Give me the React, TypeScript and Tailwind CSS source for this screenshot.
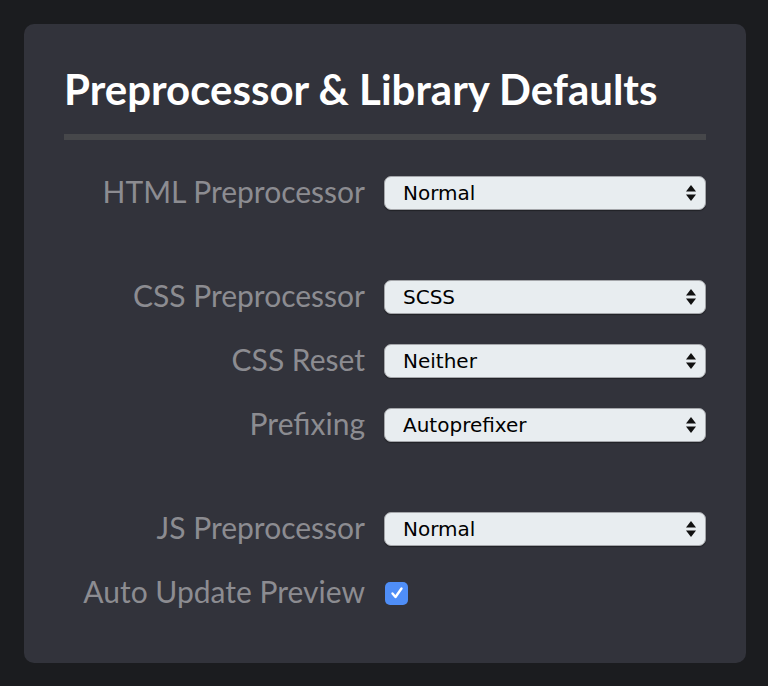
import { useState } from 'react'

type Row = { label: string; value?: string; options?: string[]; gapBefore?: boolean; checkbox?: boolean }

const ROWS: Row[] = [
  { label: 'HTML Preprocessor', value: 'Normal', options: ['Normal', 'Markdown', 'Pug', 'Haml'] },
  { label: 'CSS Preprocessor', value: 'SCSS', options: ['None', 'SCSS', 'Sass', 'Less', 'Stylus'], gapBefore: true },
  { label: 'CSS Reset', value: 'Neither', options: ['Neither', 'Normalize', 'Reset'] },
  { label: 'Prefixing', value: 'Autoprefixer', options: ['Autoprefixer', 'Prefixfree', 'Neither'] },
  { label: 'JS Preprocessor', value: 'Normal', options: ['Normal', 'Babel', 'TypeScript', 'CoffeeScript'], gapBefore: true },
  { label: 'Auto Update Preview', checkbox: true },
]

function Select({ value, options }: { value: string; options: string[] }) {
  const [v, setV] = useState(value)
  return (
    <div className="relative w-[322px] h-[34px]">
      <select
        value={v}
        onChange={(e) => setV(e.target.value)}
        className="appearance-none w-full h-full rounded-[7px] border border-[#a4a6aa] bg-[#e8edf0] pl-[18px] pr-8 text-[20px] text-black font-['DejaVu_Sans',sans-serif] shadow-[0_1px_1px_rgba(0,0,0,0.35)] outline-none"
      >
        {options.map((o) => (
          <option key={o}>{o}</option>
        ))}
      </select>
      <svg className="pointer-events-none absolute right-[10px] top-[9px]" width="10" height="16" viewBox="0 0 10 16">
        <path d="M5 0 L10 6.5 L0 6.5 Z" fill="#111" />
        <path d="M5 16 L10 9.5 L0 9.5 Z" fill="#111" />
      </svg>
    </div>
  )
}

export default function App() {
  const [auto, setAuto] = useState(true)
  return (
    <div className="w-[768px] h-[686px] bg-[#1b1c1f] pt-6 pl-6 font-['Lato',sans-serif]">
      <section className="w-[722px] h-[639px] rounded-[10px] bg-[#32333b] px-10 pt-[40px]">
        <h2 className="text-[42px] leading-[50px] font-bold text-white">Preprocessor &amp; Library Defaults</h2>
        <div className="mt-[20px] h-[6px] w-[642px] bg-[#46474a]" />
        <div className="mt-[36px]">
          {ROWS.map((row) => (
            <div key={row.label} className={`flex items-center gap-[19px] h-[34px] ${row.gapBefore ? 'mt-[70px]' : 'mt-[30px] first:mt-0'}`}>
              <span className="w-[301px] shrink-0 pb-[5px] text-right text-[30px] leading-[34px] text-[#8c8c91]">{row.label}</span>
              {row.checkbox ? (
                <button
                  type="button"
                  onClick={() => setAuto((a) => !a)}
                  className={`ml-[1px] w-[23px] h-[23px] rounded-[5px] flex items-center justify-center ${auto ? 'bg-[#4f8ef7]' : 'bg-white'}`}
                >
                  {auto && (
                    <svg width="14" height="14" viewBox="0 0 14 14">
                      <path d="M2.5 7.5 L5.5 11 L11.5 2.5" stroke="#fff" strokeWidth="2.4" fill="none" strokeLinecap="round" strokeLinejoin="round" />
                    </svg>
                  )}
                </button>
              ) : (
                <Select value={row.value!} options={row.options!} />
              )}
            </div>
          ))}
        </div>
      </section>
    </div>
  )
}
